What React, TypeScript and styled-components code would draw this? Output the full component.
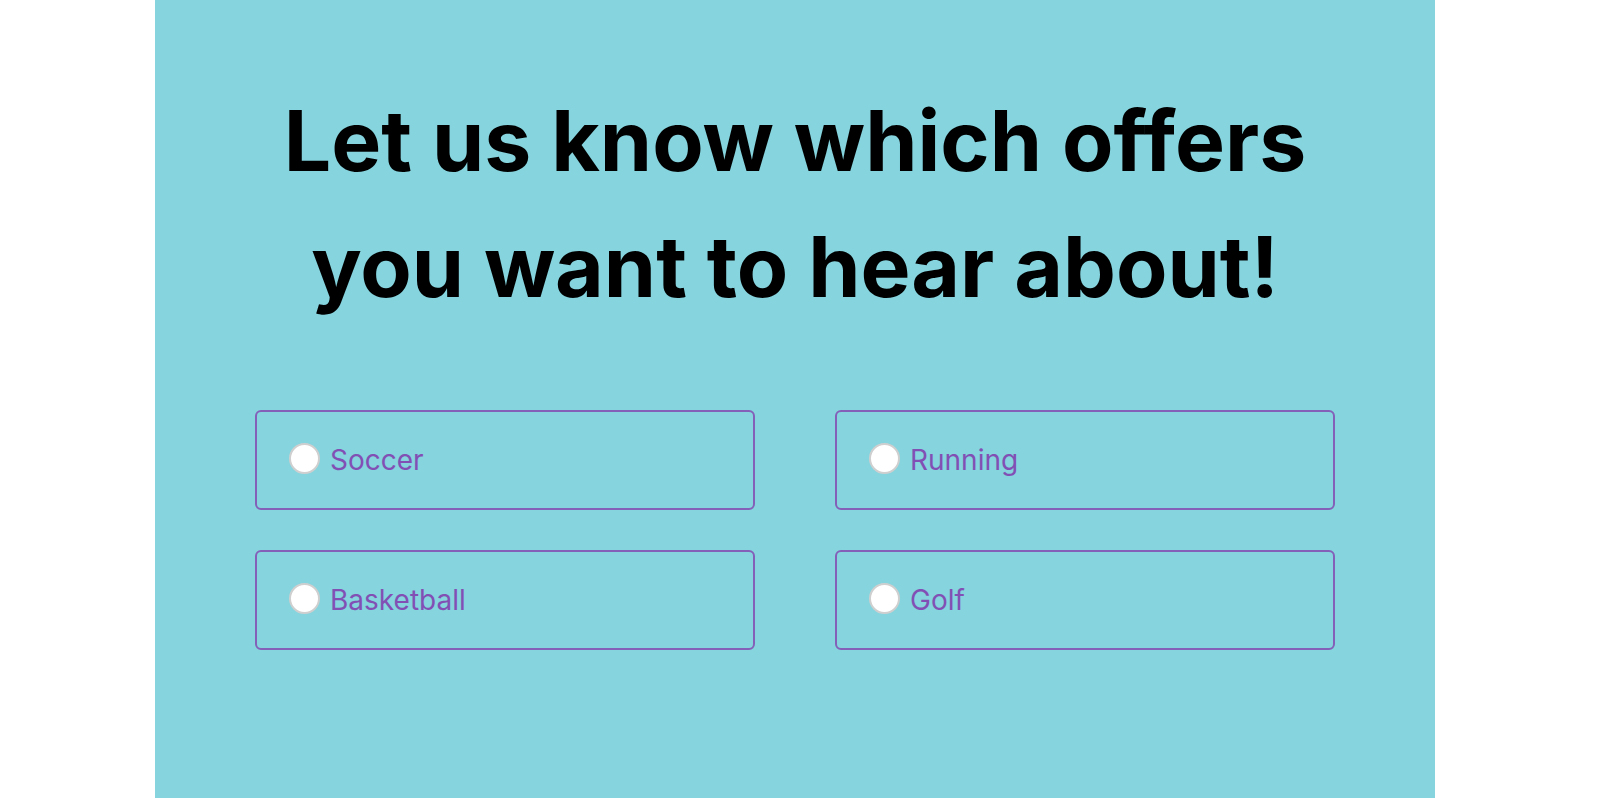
import { FC } from 'react';
import styled, { createGlobalStyle } from 'styled-components';

const GlobalStyle = createGlobalStyle`
  html, body {
    margin: 0;
    padding: 0;
    background: #ffffff;
  }
  body {
    font-family: Inter, 'Noto Sans', sans-serif;
  }
`;

const offers = ['Soccer', 'Running', 'Basketball', 'Golf'];

const Page = styled.div`
  width: 100%;
  min-height: 798px;
  display: flex;
  padding-left: 155px;
  box-sizing: border-box;
`;

// 水色のパネル
const Panel = styled.section`
  width: 1280px;
  min-height: 798px;
  background: #85d4de;
  padding: 78px 100px 0;
  box-sizing: border-box;
`;

const Title = styled.h1`
  margin: 0 auto;
  max-width: 1040px;
  font-family: Inter, sans-serif;
  font-weight: 700;
  font-size: 84px;
  line-height: 126px;
  text-align: center;
  color: #000000;
`;

const OfferGrid = styled.div`
  margin-top: 80px;
  display: grid;
  grid-template-columns: 500px 500px;
  column-gap: 80px;
  row-gap: 40px;
`;

// 選択肢の枠
const OfferLabel = styled.label`
  height: 100px;
  box-sizing: border-box;
  border: 2px solid #8460b8;
  border-radius: 6px;
  display: flex;
  align-items: center;
  padding-left: 32px;
  gap: 10px;
  cursor: pointer;
`;

const Radio = styled.span`
  width: 31px;
  height: 31px;
  margin-bottom: 4px;
  box-sizing: border-box;
  border-radius: 50%;
  background: #ffffff;
  border: 2px solid #cfcfcf;
  flex-shrink: 0;
`;

const OfferText = styled.span`
  font-family: Inter, sans-serif;
  font-size: 28px;
  color: #8250b4;
`;

const App: FC = () => {
  return (
    <>
      <GlobalStyle />
      <Page>
        <Panel>
          <Title>Let us know which offers you want to hear about!</Title>
          <OfferGrid>
            {offers.map(item => (
              <OfferLabel key={item}>
                <Radio />
                <OfferText>{item}</OfferText>
              </OfferLabel>
            ))}
          </OfferGrid>
        </Panel>
      </Page>
    </>
  );
};

export default App;
